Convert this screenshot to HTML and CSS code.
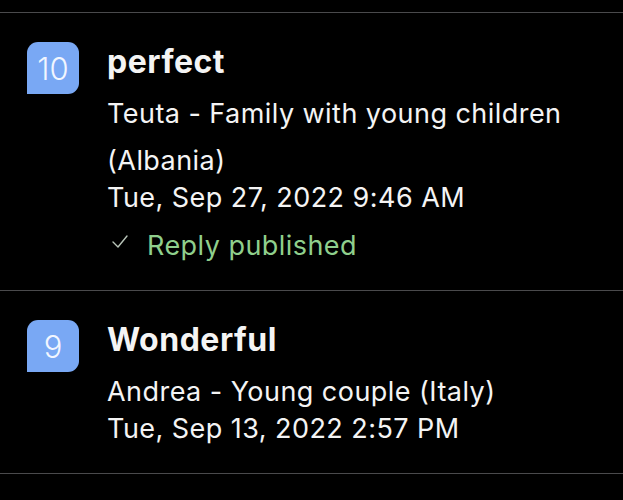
FILE: index.html
```html
<!DOCTYPE html>
<html lang="en">
<head>
    <meta charset="UTF-8">
    <meta name="viewport" content="width=device-width, initial-scale=1.0">
    <title>Reviews</title>
    <link rel="stylesheet" href="styles.css">
</head>
<body>
    <div class="review-list">
        <div class="review">
            <div class="score">10</div>
            <div class="review-body">
                <div class="review-title">perfect</div>
                <div class="review-author">Teuta - Family with young children (Albania)</div>
                <div class="review-date">Tue, Sep 27, 2022 9:46 AM</div>
                <div class="reply-status">
                    <svg class="check" width="18" height="16" viewBox="0 0 18 16">
                        <polyline points="2,8 7,13 16,2" fill="none" stroke="#b8c4b8" stroke-width="1.4" stroke-linecap="round" stroke-linejoin="round"/>
                    </svg>
                    <span>Reply published</span>
                </div>
            </div>
        </div>
        <div class="review">
            <div class="score">9</div>
            <div class="review-body">
                <div class="review-title">Wonderful</div>
                <div class="review-author">Andrea - Young couple (Italy)</div>
                <div class="review-date">Tue, Sep 13, 2022 2:57 PM</div>
            </div>
        </div>
    </div>
</body>
</html>
```

FILE: styles.css
```css
body {
    font-family: Inter, "Noto Sans", sans-serif;
    margin: 0;
    padding: 0;
    background-color: #000;
    color: #f4f4f4;
    height: 500px;
    overflow: hidden;
}
.review-list {
    margin-top: 12px;
    border-top: 1px solid #4a4a4c;
}
.review {
    display: flex;
    align-items: flex-start;
    padding: 29px 20px 31px 27px;
    border-bottom: 1px solid #4a4a4c;
}
.score {
    width: 52px;
    height: 52px;
    flex-shrink: 0;
    background-color: #79a8f4;
    border-radius: 11px 11px 11px 0;
    display: flex;
    justify-content: center;
    align-items: center;
    font-size: 31px;
    font-weight: 300;
    color: #f2f6ff;
    margin-right: 28px;
}
.review-body {
    flex: 1;
}
.review-title {
    font-size: 32px;
    font-weight: 700;
    letter-spacing: 0.5px;
    line-height: 40px;
}
.review-author {
    font-size: 27px;
    letter-spacing: 0.45px;
    line-height: 47px;
    margin-top: 8px;
}
.review-date {
    font-size: 27px;
    letter-spacing: 0.45px;
    line-height: 27px;
}
.reply-status {
    display: flex;
    align-items: center;
    margin-top: 21px;
    font-size: 27px;
    letter-spacing: 0.45px;
    line-height: 27px;
    color: #8fcf8c;
}
.check {
    margin-left: 4px;
    margin-right: 18px;
    margin-top: -8px;
}
```
